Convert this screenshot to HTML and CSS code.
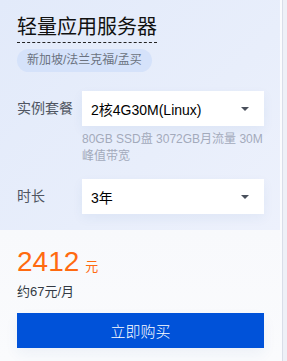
FILE: index.html
```html
<!DOCTYPE html>
<html lang="zh-CN">
<head>
    <meta charset="UTF-8">
    <title>轻量应用服务器</title>
    <link rel="stylesheet" href="styles.css">
</head>
<body>
    <div class="page">
        <div class="card">
            <div class="card-top">
                <h2 class="title">轻量应用服务器</h2>
                <div><span class="tag">新加坡/法兰克福/孟买</span></div>

                <div class="row row-first">
                    <div class="label">实例套餐</div>
                    <div class="field">
                        <div class="select">
                            <span>2核4G30M(Linux)</span>
                            <i class="caret"></i>
                        </div>
                        <div class="desc">80GB SSD盘 3072GB月流量 30M 峰值带宽</div>
                    </div>
                </div>

                <div class="row">
                    <div class="label">时长</div>
                    <div class="field">
                        <div class="select">
                            <span>3年</span>
                            <i class="caret"></i>
                        </div>
                    </div>
                </div>
            </div>

            <div class="card-bottom">
                <div class="price"><span class="num">2412</span><span class="unit">元</span></div>
                <div class="monthly">约67元/月</div>
                <button class="buy-button">立即购买</button>
            </div>
        </div>
        <div class="side"></div>
    </div>
</body>
</html>
```

FILE: styles.css
```css
body {
    margin: 0;
    font-family: "Liberation Sans", "Noto Sans CJK SC", sans-serif;
    background-color: #eef0f7;
}
.page {
    display: flex;
    height: 361px;
}
.card {
    width: 280px;
    display: flex;
    flex-direction: column;
}
.side {
    width: 2px;
    background-color: #fafbfe;
    border-right: 1px solid #d9dde8;
}
.card-top {
    background: linear-gradient(135deg, #e2eafa 0%, #e8eefb 60%, #edf1fc 100%);
    padding: 14px 16px 16px 17px;
}
.title {
    display: inline-block;
    margin: 0;
    font-size: 20px;
    font-weight: 400;
    line-height: 26px;
    color: #111;
    padding-bottom: 2px;
    border-bottom: 1px dashed #222;
}
.tag {
    display: inline-block;
    margin-top: 6px;
    height: 23px;
    line-height: 23px;
    padding: 0 10px;
    border-radius: 12px;
    background-color: #d5e2fa;
    color: #6b7280;
    font-size: 12px;
}
.row {
    display: flex;
    margin-top: 14px;
}
.row-first {
    margin-top: 19px;
}
.label {
    width: 65px;
    flex-shrink: 0;
    font-size: 14px;
    line-height: 35px;
    color: #4f5561;
}
.field {
    width: 182px;
}
.select {
    height: 35px;
    background-color: #fff;
    display: flex;
    align-items: center;
    justify-content: space-between;
    padding: 0 15px 0 9px;
    font-size: 14px;
    color: #000;
    box-shadow: 0 4px 12px rgba(40, 80, 160, 0.06);
}
.caret {
    width: 0;
    height: 0;
    border-left: 4px solid transparent;
    border-right: 4px solid transparent;
    border-top: 4px solid #4a505c;
}
.desc {
    margin-top: 5px;
    font-size: 12px;
    line-height: 17px;
    color: #a3aabb;
}
.card-bottom {
    flex: 1;
    background: linear-gradient(180deg, #f8f9fc 0%, #fafbfd 100%);
    padding: 17px 16px 0 17px;
}
.price {
    color: #ff6a10;
    line-height: 29px;
}
.num {
    font-size: 28px;
}
.unit {
    font-size: 13px;
    margin-left: 6px;
}
.monthly {
    margin-top: 2px;
    font-size: 13px;
    color: #333a44;
    line-height: 18px;
}
.buy-button {
    display: block;
    width: 247px;
    height: 35px;
    margin-top: 12px;
    border: none;
    background-color: #0052d9;
    color: #fff;
    font-family: inherit;
    font-size: 15px;
    font-weight: 300;
    box-shadow: 0 6px 14px rgba(40, 80, 160, 0.06);
    cursor: pointer;
}
```
